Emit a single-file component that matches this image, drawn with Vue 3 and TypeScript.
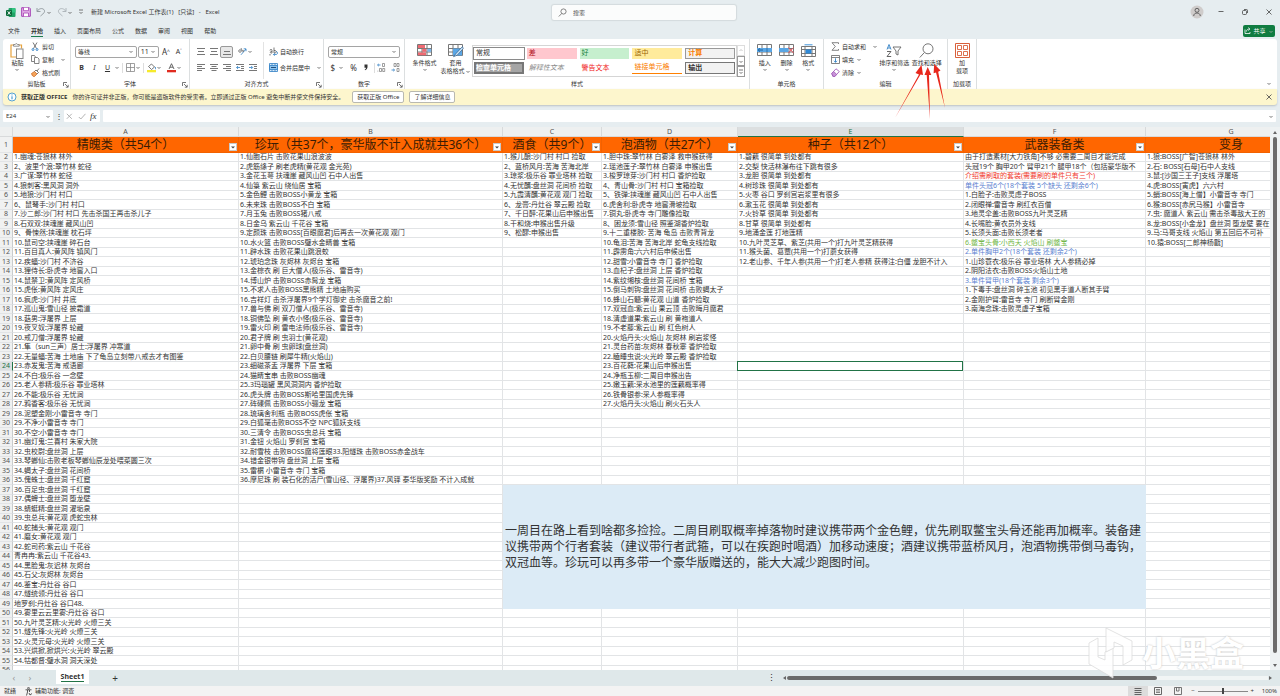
<script setup lang="ts">
import { ref } from 'vue'

interface Column {
  id: string
  title: string
  cls: string
  filter: boolean
  items: string[]
}

interface Cell {
  key: string
  text: string
  cls: string
  colspan: number
  rowspan: number
}

const columns: Column[] = [
  {
    id: 'A', title: '精魄类（共54个）', cls: 'col-a', filter: true,
    items: [
      '1.幽魂:苍狼林 林外', '2、波里个浪:翠竹林 蛇径', '3.广谋:翠竹林 蛇径', '4.狼刺客:黑风洞 洞外', '5.地狼:沙门村 村口',
      '6、鼠弩手:沙门村 村口', '7.沙二郎:沙门村 村口 先击杀国王再击杀儿子', '8.石双双:挟魂崖 藏风山凹', '9、骨悚然:挟魂崖 枕石坪',
      '10.鼠司空:挟魂崖 碎石台', '11.百目真人:黄风阵 镇风门', '12.疾蝠:沙门村 不济谷', '13.狸侍长:卧虎寺 地窖入口',
      '14.鼠禁卫:黄风阵 定风桥', '15.虎伥:黄风阵 定风庄', '16.疯虎:沙门村 井底', '17.巡山鬼:雪山径 披霜道', '18.菇男:浮屠界 上层',
      '19.夜叉奴:浮屠界 轮藏', '20.戒刀僧:浮屠界 轮藏', '21.隼（sun三声）居士:浮屠界 冲寒道',
      '22.无量蝠:苦海 土地庙 下了龟岛立刻带八戒去才有图鉴', '23.赤发鬼:苦海 戒语廊', '24.不白:极乐谷 一念壁',
      '25.老人参精:极乐谷 罪业塔林', '26.不能:极乐谷 无忧涧', '27.鸦香客:极乐谷 无忧涧', '28.泥塑金刚:小雷音寺 寺门',
      '29.不净:小雷音寺 寺门', '30.不空:小雷音寺 寺门', '31.幽灯鬼:兰喜村 朱家大院', '32.虫校尉:盘丝洞 上层',
      '33.琴螂仙:击败老板琴螂仙辰龙处喂菜圆三次', '34.蝎太子:盘丝洞 花间桥', '35.傀蛛士:盘丝洞 千红窟', '36.百足虫:盘丝洞 千红窟',
      '37.偶蜱士:盘丝洞 堕龙壁', '38.蜻蜓精:盘丝洞 濯垢泉', '39.虫总兵:黄花观 虎蛇虫林', '40.蛇捕头:黄花观 观门',
      '41.磨女:黄花观 观门', '42.蛇司药:紫云山 千花谷', '青冉冉:紫云山 千花谷43.', '44.黑脸鬼:灰迟林 灰烬台',
      '45.石父:灰烬林 灰烬台', '46.鉴宝:丹灶谷 谷口', '47.燧统领:丹灶谷 谷口', '地罗刹:丹灶谷 谷口48.',
      '49.雾里云云里雾:丹灶谷 谷口', '50.九叶灵芝精:火光岭 火燎三关', '51.燧先锋:火光岭 火燎三关', '52.火灵元母:火光岭 火燎三关',
      '53.兴烘掀,掀烘兴:火光岭 翠云殿', '54.牯都督:璧水洞 洞天深处',
    ],
  },
  {
    id: 'B', title: '珍玩（共37个，豪华版不计入成就共36个）', cls: 'col-b', filter: true,
    items: [
      '1.仙胞石片 击败花果山浪波波', '2.虎筋绦子 刷老虎精(黄花观 金光苑)', '3.金花玉萼 扶魂崖 藏风山凹 石中人出售', '4.仙箓 紫云山 绕仙居 宝箱',
      '5.金色鲤 击败BOSS小黄龙 宝箱', '6.未来珠 击败BOSS不白 宝箱', '7.月玉兔 击败BOSS猪八戒', '8.日金乌 紫云山 千花谷 宝箱',
      '9.定颜珠 击败BOSS[百眼魔君]后再去一次黄花观 观门', '10.水火篮 击败BOSS璧水金睛兽 宝箱', '11.辟水珠 击败花果山跳浪蛟',
      '12.琥珀念珠 灰烬林 灰烬台 宝箱', '13.金棕衣 刷 巨大僧人(极乐谷、雷音寺)', '14.博山炉 击败BOSS赤髯龙 宝箱',
      '15.不求人击败BOSS黑熊精 土地庙购买', '16.吉祥灯 击杀浮屠界9个学灯御史 击杀魔音之前!', '17.兽与佛 刷 双刀僧人(极乐谷、雷音寺)',
      '18.铜佛坠 刷 黄衣小怪(极乐谷、雷音寺)', '19.雷火印 刷 雷电法师(极乐谷、雷音寺)', '20.君子牌 刷 虫羽士(黄花观)',
      '21.卵中骨 刷 虫卵球(盘丝洞)', '22.白贝腰链 刷犀牛精(火焰山)', '23.细磁茶盂 浮屠界 下层 宝箱', '24.猫睛宝串 击败BOSS幽魂',
      '25.3玛瑙罐 黑风洞洞内 香炉捡取', '26.虎头牌 击败BOSS斯哈里国虎先锋', '27.砗磲佩 击败BOSS小骊龙 宝箱', '28.琉璃舍利瓶 击败BOSS虎伥 宝箱',
      '29.白狐毫击败BOSS不空 NPC狐妖支线', '30.三清令 击败BOSS虫总兵 宝箱', '31.金钮 火焰山 罗刹宫 宝箱',
      '32.耐雪枝 击败BOSS魔将莲眼33.阳燧珠 击败BOSS赤金战车', '34.错金银带钩 盘丝洞 上层 宝箱', '35.雷榍 小雷音寺 寺门 宝箱',
      '36.摩尼珠 刷 装石化的活尸(雪山径、浮屠界)37.风铎 泰华版奖励 不计入成就',
    ],
  },
  {
    id: 'C', title: '酒食（共9个）', cls: 'col-c', filter: true,
    items: [
      '1.猴儿酿:沙门村 村口 捡取', '2、蓝桥风月:苦海 苦海北岸', '3.琼浆:极乐谷 罪业塔林 捡取', '4.无忧醑:盘丝洞 花间桥 捡取',
      '5.九霞清醑:黄花观 观门 捡取', '6、龙膏:丹灶谷 翠云殿 捡取', '7、千日醉:花果山后申猴出售', '8.干和烧:申猴出售升级', '9、松醪:申猴出售',
    ],
  },
  {
    id: 'D', title: '泡酒物（共27个）', cls: 'col-d', filter: true,
    items: [
      '1.胆中珠:翠竹林 白雾泽 救申猴获得', '2.瑶池莲子:翠竹林 白雾泽 申猴出售', '3.梭罗琼芽:沙门村 村口 香炉捡取', '4、青山骨:沙门村 村口 宝箱捡取',
      '5、铁弹:挟魂崖 藏风山凹 石中人出售', '6.虎舍利:卧虎寺 地窖滑坡捡取', '7.铜丸:卧虎寺 寺门雕像捡取', '8、困龙须:雪山径 照鉴湖香炉捡取',
      '9.十二重楼胶: 苦海 龟岛 击败青背龙', '10.龟泪:苦海 苦海北岸 蛇龟支线捡取', '11.霹雳角:六六村后申候出售', '12.甜雪:小雷音寺 寺门 香炉捡取',
      '13.血杞子:盘丝洞 上层 香炉捡取', '14.紫纹缃核:盘丝洞 花间桥 宝箱', '15.倒马刺钩:盘丝洞 花间桥 击败蝎太子', '16.蜂山石髓:黄花观 山道 香炉捡取',
      '17.双冠血:紫云山 果云顶 击败晦月魔君', '18.清虚道果:紫云山 刷 黄袍道人', '19.不老藤:紫云山 刷 红色树人', '20.火焰丹头:火焰山 灰烬林 刷岩浆怪',
      '21.灵台药苗:灰烬林 春秋寨 香炉捡取', '22.瞌睡虫说:火光岭 翠云殿 香炉捡取', '23.百花蕤:花果山后申猴出售', '24.净瓶玉柳:二周目申猴出告',
      '25.嫩玉藕:采水池里的莲藕概率得', '26.铁骨银参:采人参概率得', '27.火焰丹头:火焰山 刷火石头人',
    ],
  },
  {
    id: 'E', title: '种子（共12个）', cls: 'col-e', filter: true,
    items: [
      '1.碧藕 很简单 到处都有', '2.交梨 快活林瀑布往下跳有很多', '3.龙胆 很简单 到处都有', '4.树珍珠 很简单 到处都有', '5.火枣 谷口 罗刹宫岩浆里有很多',
      '6.漱玉花 很简单 到处都有', '7.火铃草 很简单 到处都有', '8.甘草 很简单 到处都有', '9.地涌金莲 打地莲精',
      '10.九叶灵芝草、紫芝(共用一个)打九叶灵芝精获得', '11.猴头菌、葛蕈(共用一个)打蘑女获得',
      '12.老山参、千年人参(共用一个)打老人参精 获得注:白僵 龙胆不计入',
    ],
  },
  {
    id: 'F', title: '武器装备类', cls: 'col-f', filter: true,
    items: [
      '由于打造素材[大力铁角]不够 必需要二周目才能完成', '头冠19个 胸甲20个 臂甲21个 腿甲18个（包括豪华版不', '介绍需刷取的套装(需要刷的单件只有三个)',
      '单件头冠6个(18个套装 5个缺头 还剩余6个)', '1.白脸子:击败灵虑子BOSS', '2.闭眼禅:雷音寺 刷红衣百僧', '3.地灵伞盖:击败BOSS九叶灵芝精',
      '4.长嘴脸:黄衣员外支线', '5.长须头面:击败长须老者', '6.鳖宝头骨:小西天 火焰山 刷鳖宝', '2.单件胸甲2个(18个套装 还剩余2个)',
      '1.山珍蓑衣:极乐谷 罪业塔林 大人参精必掉', '2.阴阳法衣:击败BOSS火焰山土地', '3.单件臂甲(18个套装 剩余3个)',
      '1.下毒手:盘丝洞 碎玉池 初见黑手道人断其手臂', '2.金刚护臂:雷音寺 寺门 刷断臂金刚', '3.南海念珠:击败灵虚子宝箱',
    ],
  },
  {
    id: 'G', title: '变身', cls: 'col-g', filter: false,
    items: [
      '1.狼:BOSS[广智]苍狼林 林外', '2.石: BOSS[石母]石中人支线', '3.鼠:[沙国三王子]支线 浮屠塔', '4.虎:BOSS[寅虎】六六村',
      '5.蛸:BOSS[海上僧】小雷音寺 寺门', '6.猴:BOSS[赤尻马猴】小雷音寺', '7.虫: 魔道人 紫云山 需击杀毒敌大王的', '8.龙:BOSS[小金龙】盘丝洞 堕龙壁 要在',
      '9.马:马哥支线 火焰山 第五回后不可补', '10.猿:BOSS[二郎神杨戬]',
    ],
  },
]

const note =
  '一周目在路上看到啥都多捡捡。二周目刷取概率掉落物时建议携带两个金色鲤，优先刷取鳖宝头骨还能再加概率。装备建议携带两个行者套装（建议带行者武箍，可以在疾跑时喝酒）加移动速度；酒建议携带蓝桥风月，泡酒物携带倒马毒钩，双冠血等。珍玩可以再多带一个豪华版赠送的，能大大减少跑图时间。'

const tones: Record<string, string> = { F4: 'red', F5: 'blue', F11: 'green', F12: 'blue', F15: 'blue' }
const noteTop = 37
const noteRows = 13
const activeRow = 24

function buildRow(r: number): Cell[] {
  const cells: Cell[] = []
  const inNote = r >= noteTop && r < noteTop + noteRows
  for (const c of columns) {
    if (inNote && 'CDEF'.includes(c.id)) {
      if (r === noteTop && c.id === 'C') {
        cells.push({ key: 'note', text: note, cls: 'note', colspan: 4, rowspan: noteRows })
      }
      continue
    }
    const id = c.id + r
    const cls = [tones[id] ?? '', c.id === 'E' && r === activeRow ? 'active' : ''].join(' ')
    cells.push({ key: id, text: c.items[r - 2] ?? '', cls, colspan: 1, rowspan: 1 })
  }
  return cells
}

const rows = Array.from({ length: 55 }, (_, i) => ({ n: i + 2, cells: buildRow(i + 2) }))

const tabs = ['文件', '开始', '插入', '页面布局', '公式', '数据', '审阅', '视图', '帮助']
const activeTab = ref('开始')
const search = ref('')
const nameBox = ref('E24')
const formula = ref('')
const zoom = ref(50)

const styles = [
  { t: '常规', c: 's-normal' }, { t: '差', c: 's-bad' }, { t: '好', c: 's-good' }, { t: '适中', c: 's-mid' }, { t: '计算', c: 's-calc' },
  { t: '检查单元格', c: 's-check' }, { t: '解释性文本', c: 's-expl' }, { t: '警告文本', c: 's-warn' }, { t: '链接单元格', c: 's-link' }, { t: '输出', c: 's-out' },
]

const lines = (a: number[][]) => a.map(([x, y, w]) => `<path d="M${x} ${y}h${w}" stroke="#777"/>`).join('')
const grid = '<path d="M.5 .5h14v11h-14zM.5 4.5h14M.5 8h14M5 .5v11M10 .5v11" fill="#fff" stroke="#777"/>'

const icons: Record<string, string> = {
  chev: '<path d="M1.500 2l1.500 1.500L4.500 2" fill="none" stroke="#555" stroke-width=".8"/>',
  excel: '<rect x="2.500" y="0" width="7" height="9" rx="1" fill="#21a366"/><path d="M6 0h2.500a1 1 0 0 1 1 1v3.500H6z" fill="#33c481"/><rect x="0" y="2" width="6" height="6" rx="1" fill="#0b6b3a"/><path d="M1.700 3.300l2.600 3.400M4.300 3.300L1.700 6.700" stroke="#fff" stroke-width=".9"/>',
  save: '<path d="M.7.7h7.600l1 1v7.600H.7z" fill="#e6b5ea" stroke="#a33eb2"/><path d="M2.500.7v3h5v-3M2.500 9.300V6h5v3.300" fill="#fff" stroke="#a33eb2" stroke-width=".8"/>',
  undo: '<path d="M1 1v3.500h3.500M1.200 4.200C3 1.500 6 .8 7.800 2.500c1.700 2 .5 3.500-3.300 6.500" fill="none" stroke="#8b9499" stroke-width=".9"/>',
  redo: '<path d="M9 1v3.500H5.500M8.800 4.200C7 1.500 4 .8 2.200 2.500c-1.700 2-.5 3.500 3.300 6.500" fill="none" stroke="#a9b1b5" stroke-width=".9"/>',
  custom: '<path d="M1 1h4M1.500 3l1.500 1.500L4.500 3" fill="none" stroke="#555" stroke-width=".8"/>',
  search: '<circle cx="5.500" cy="3.500" r="2.600" fill="none" stroke="#666" stroke-width=".8"/><path d="M3.700 5.500L.8 8.500" stroke="#666" stroke-width=".8"/>',
  person: '<circle cx="7" cy="7" r="6.500" fill="#cfcccb"/><circle cx="7" cy="5.300" r="2" fill="none" stroke="#555" stroke-width=".9"/><path d="M3.700 11c0-4 6.600-4 6.600 0" fill="none" stroke="#555" stroke-width=".9"/>',
  restore: '<rect x=".5" y="1.500" width="4" height="4" rx="1" fill="none" stroke="#444" stroke-width=".8"/><path d="M2 .5h2.500a1 1 0 0 1 1 1V4" fill="none" stroke="#444" stroke-width=".8"/>',
  close: '<path d="M.5.5l5 5M5.500.5l-5 5" stroke="#444" stroke-width=".8"/>',
  min: '<path d="M.5 2.500h5" stroke="#444" stroke-width=".8"/>',
  share: '<path d="M1 2.500v4h5V5M2.500 4.500C2.500 2.500 4 2 5.500 2M4.300.6L5.900 2 4.300 3.500" fill="none" stroke="#fff" stroke-width=".8"/>',
  paste: '<path d="M4 2H1v12h5M9 2h2.500v3.500" fill="none" stroke="#e8a33d" stroke-width="1.200"/><path d="M3.500 3.200V1.500h1.700a1.200 1.200 0 0 1 2.300 0h1.700v1.700z" fill="#fff" stroke="#777" stroke-width=".8"/><rect x="6.500" y="6" width="6.500" height="9.500" fill="#fff" stroke="#888"/>',
  cut: '<path d="M2 .5l3.500 6M6 .5L2.500 6.500" stroke="#555" stroke-width=".8"/><circle cx="2" cy="7.500" r="1" fill="none" stroke="#2f7fc4" stroke-width=".9"/><circle cx="6" cy="7.500" r="1" fill="none" stroke="#2f7fc4" stroke-width=".9"/>',
  copy: '<path d="M3.500 6.500H.5V.5h3l1 1.500" fill="none" stroke="#666" stroke-width=".8"/><path d="M3.500 2.500h3l1.500 1.500v4.500H3.500z" fill="#fff" stroke="#666" stroke-width=".8"/>',
  brush: '<path d="M.5 5.500l3-2 2.500 2.500-2.500 2.500c-1 .3-2.500-.5-3-3z" fill="#f3a45c" stroke="#c8611a" stroke-width=".7"/><path d="M3.500 3.500L5 2l2.500 2.500L6 6M6 3l2-2.500" fill="none" stroke="#555" stroke-width=".8"/>',
  launch: '<path d="M.5 4V.5H4M2 2l3 3M5.200 2.800v2.400H2.800" fill="none" stroke="#555" stroke-width=".8"/>',
  borders: '<path d="M.5.5h8v8h-8zM4.500.5v8M.5 4.500h8" fill="none" stroke="#888" stroke-width=".8"/>',
  fill: '<path d="M1.500 3.500L4.500 1l3 3-3 2.500z" fill="#fff" stroke="#555" stroke-width=".8"/><path d="M8 4c1 1.500.8 2 0 2" fill="none" stroke="#2f7fc4"/><rect x="0" y="7" width="9" height="2.300" fill="#f6ea2c"/>',
  fontcol: '<path d="M2 6L4.500.7 7 6M3 4.200h3" fill="none" stroke="#555" stroke-width=".9"/><rect x="0" y="7" width="9" height="2.300" fill="#e02b20"/>',
  top: lines([[0, 1.500, 8], [1, 4.500, 6], [0, 7.500, 8]]),
  mid: lines([[0, 1.500, 8], [1, 4.500, 6], [0, 7.500, 8]]),
  bot: lines([[1, 4.500, 6], [0, 7.500, 8]]),
  left: lines([[0, 1.500, 8], [0, 3.500, 5], [0, 5.500, 8], [0, 7.500, 5]]),
  center: lines([[0, 1.500, 8], [1.500, 3.500, 5], [0, 5.500, 8], [1.500, 7.500, 5]]),
  right: lines([[0, 1.500, 8], [3, 3.500, 5], [0, 5.500, 8], [3, 7.500, 5]]),
  outdent: lines([[0, 1.500, 8], [5, 3.500, 3], [5, 5.500, 3], [0, 7.500, 8]]) + '<path d="M4 4.500H.7M2 3L.6 4.500 2 6" fill="none" stroke="#2f7fc4" stroke-width=".8"/>',
  indent: lines([[0, 1.500, 8], [5, 3.500, 3], [5, 5.500, 3], [0, 7.500, 8]]) + '<path d="M0 4.500h3.500M2.200 3l1.500 1.500L2.200 6" fill="none" stroke="#2f7fc4" stroke-width=".8"/>',
  orient: '<path d="M3 7.800L8 2M8 4.200V1.800H5.700" fill="none" stroke="#2f7fc4" stroke-width=".8"/><circle cx="2" cy="4" r="1.300" fill="none" stroke="#555" stroke-width=".7"/><path d="M3 1l1.500 3.500M4.500 3.500c1.500-.8 1.500 1.500.3 1.500" fill="none" stroke="#555" stroke-width=".7"/>',
  wrap: '<path d="M1 3.500c0-1.500 2-1.500 2 0V6c-2 .5-2.500-1.800 0-1.500M1 8.500V7M5 .5V6c3 .5 3-3 0-2.500" fill="none" stroke="#555" stroke-width=".8"/><path d="M7 4.500c2 0 2 3 0 3H4.500M5.700 6.300L4.400 7.500l1.300 1.300" fill="none" stroke="#2f7fc4" stroke-width=".8"/>',
  merge: '<path d="M.5.5h8v8h-8zM3 .5v2M6 .5v2M3 6.500v2M6 6.500v2" fill="#dcecf9" stroke="#2f7fc4" stroke-width=".8"/><path d="M.5 2.500h8v4h-8z" fill="#8fc4ef" stroke="#2f7fc4" stroke-width=".8"/><path d="M2 4.500h5" stroke="#1d4e7c"/>',
  comma: '<path d="M1.500 1.500h3v2.500C4.500 5.500 3.500 7 2 7.300L1.700 6.500c.9-.4 1.300-1 1.400-1.800H1.500z" fill="#333"/>',
  decup: '<path d="M3.500 2H.6M1.800.9L.6 2l1.200 1.200" fill="none" stroke="#2f7fc4" stroke-width=".8"/><path d="M5.500.5h2v3h-2zM2.500 5.500h2v3h-2zM5.700 5.500h2v3h-2zM.8 8.500v-.8" fill="none" stroke="#777" stroke-width=".7"/>',
  decdn: '<path d="M.5 7h3M2.300 5.900L3.500 7 2.300 8.200" fill="none" stroke="#2f7fc4" stroke-width=".8"/><path d="M3 .5h2v3H3zM6 .5h2v3H6zM6 5.500h2v3H6z" fill="none" stroke="#777" stroke-width=".7"/>',
  cond: grid + '<path d="M1 1h7v3H1zM1 8.500h8v2.700H1z" fill="#ef6a72"/><path d="M5.300 4.800h4v3h-4z" fill="#ef6a72"/><path d="M10.500 4.800h3.700v3h-3.700z" fill="#7db8ea"/>',
  tablefmt: grid + '<path d="M5 4.500h9v7H5z" fill="#5ba7e6"/><path d="M14.500 2.500L8 9.500l-2.500 3.200 3.700-1.500 6-6.500z" fill="#cfe4f6" stroke="#2c5d8a" stroke-width=".7"/>',
  insert: grid + '<path d="M0 4h15v4H0z" fill="#5aa6e4"/><path d="M6 6H1.300M3 4.300L1.200 6 3 7.700" fill="none" stroke="#1c5f9b" stroke-width=".9"/><path d="M10 4v4" stroke="#1c5f9b" stroke-width=".7"/>',
  remove: grid + '<path d="M0 4h9.500v4H0z" fill="#5aa6e4"/><path d="M9.500 3.500l5 5.500M14.500 3.500l-5 5.500" stroke="#e2505a" stroke-width="1"/>',
  format: '<path d="M3.500 .8h8" stroke="#2f8ad8" stroke-width=".9"/><path d="M.5 2.500h14v10h-14zM.5 5.500h14M.5 9.500h14M4 2.500v10M11 2.500v10" fill="#fff" stroke="#777"/><path d="M4.500 5.500h6v4h-6z" fill="#2f8ad8"/>',
  sum: '<path d="M7.500 2V.7H1l3.300 3.800L1 8.300h6.500V7" fill="none" stroke="#666" stroke-width=".8"/>',
  filldn: '<path d="M.5.5h8v8h-8zM.5 2.500h8" fill="none" stroke="#666" stroke-width=".8"/><path d="M4.500 3.300v4M3 5.800l1.500 1.500L6 5.800" fill="none" stroke="#2f7fc4" stroke-width=".9"/>',
  clear: '<path d="M.8 5.500L5 .8l3.300 2.700-4.500 5-2-.3z" fill="#fff" stroke="#9b4fb3" stroke-width=".8"/><path d="M.8 5.500l1.700-2 3.200 2.800-1.900 2.200-2-.3z" fill="#c894d8" stroke="#9b4fb3" stroke-width=".7"/>',
  sort: '<path d="M1 6.500L3 1.500l2 5M1.700 5h2.600" fill="none" stroke="#2f7fc4" stroke-width=".9"/><path d="M1 8.500h4l-4 5h4.200" fill="none" stroke="#555" stroke-width=".9"/><path d="M7 4h8l-3 4v4l-2-1V8z" fill="#fff" stroke="#666" stroke-width=".9"/>',
  find: '<circle cx="9" cy="5.800" r="5" fill="#fff" stroke="#666" stroke-width=".9"/><path d="M5.400 9.500L.8 14.500" stroke="#666" stroke-width=".9"/>',
  addin: '<path d="M.5.5h14v14H.5z" fill="#fff" stroke="#d9603b"/><path d="M2.500 2.500h4v4h-4zM8.500 2.500h4v4h-4zM2.500 8.500h4v4h-4zM8.500 8.500h4v4h-4z" fill="#fff" stroke="#d9603b" stroke-width=".9"/>',
  info: '<circle cx="5" cy="5" r="4" fill="#fff" stroke="#2b8ac8" stroke-width=".8"/><path d="M5 4.300v3M5 2.500v.9" stroke="#2b8ac8"/>',
  check: '<path d="M.8 4l2 2L7.500.8" fill="none" stroke="#aaa" stroke-width=".9"/>',
  cross: '<path d="M.8.8l5 5M5.800.8l-5 5" stroke="#aaa" stroke-width=".9"/>',
  access: '<circle cx="3.500" cy="1.200" r=".9" fill="none" stroke="#333" stroke-width=".7"/><path d="M.5 2.800h6M2.500 3v2L1.500 8.500M4.500 3v2" fill="none" stroke="#333" stroke-width=".8"/><path d="M4 6l1 2 2-1.500" fill="none" stroke="#333" stroke-width=".8"/>',
  vnormal: '<path d="M.5 1.500h7M.5 3.500h7M.5 5.500h7M.5 7.500h7" stroke="#444" stroke-width=".8"/>',
  vlayout: '<path d="M.5.5h7v7h-7z" fill="none" stroke="#666"/><path d="M2 2.500h4M2 4h4M2 5.500h4" stroke="#555" stroke-width=".7"/>',
  vbreak: '<path d="M.5.500h7v7h-7zM2.500 .5v3.500h2.500V.5" fill="none" stroke="#666" stroke-width=".9"/>',
}
</script>

<template>
  <div class="app">
    <header class="titlebar">
      <button class="bare" aria-label="Excel"><svg width="10" height="9" v-html="icons.excel" /></button>
      <button class="bare save" aria-label="保存"><svg width="10" height="10" v-html="icons.save" /></button>
      <button class="bare" aria-label="撤消"><svg width="10" height="10" v-html="icons.undo" /><svg width="6" height="5" v-html="icons.chev" /></button>
      <button class="bare" aria-label="恢复"><svg width="10" height="10" v-html="icons.redo" /><svg width="6" height="5" v-html="icons.chev" /></button>
      <button class="bare" aria-label="自定义"><svg width="6" height="6" v-html="icons.custom" /></button>
      <h1>新建 Microsoft Excel 工作表(1)&nbsp;&nbsp; [只读]&nbsp;&nbsp; -&nbsp;&nbsp; Excel</h1>
      <label class="search">
        <svg width="9" height="10" v-html="icons.search" />
        <input v-model="search" type="text" placeholder="搜索" aria-label="搜索" />
      </label>
      <div class="window">
        <button class="bare" aria-label="帐户"><svg width="14" height="14" v-html="icons.person" /></button>
        <button class="bare" aria-label="最小化"><svg width="6" height="6" v-html="icons.min" /></button>
        <button class="bare" aria-label="还原"><svg width="6" height="6" v-html="icons.restore" /></button>
        <button class="bare" aria-label="关闭"><svg width="6" height="6" v-html="icons.close" /></button>
      </div>
    </header>

    <nav class="tabs">
      <button v-for="t in tabs" :key="t" :class="{ on: t === activeTab }" @click="activeTab = t">{{ t }}</button>
      <button class="share"><svg width="7" height="8" v-html="icons.share" />共享<svg width="6" height="5" class="white" v-html="icons.chev" /></button>
    </nav>

    <section class="ribbon">
      <div class="group clip">
        <div class="body">
          <button class="big"><svg width="14" height="16" v-html="icons.paste" /><span>粘贴</span><svg width="6" height="5" v-html="icons.chev" /></button>
          <div class="stack">
            <button><svg width="9" height="9" v-html="icons.cut" />剪切</button>
            <button><svg width="9" height="9" v-html="icons.copy" />复制<svg class="far" width="6" height="5" v-html="icons.chev" /></button>
            <button><svg width="9" height="9" v-html="icons.brush" />格式刷</button>
          </div>
        </div>
        <div class="label">剪贴板<svg width="6" height="6" v-html="icons.launch" /></div>
      </div>

      <div class="group font">
        <div class="body two">
          <div class="line">
            <span class="pick wide"><select aria-label="字体"><option>等线</option></select><svg width="6" height="5" v-html="icons.chev" /></span>
            <span class="pick size"><select aria-label="字号"><option>11</option></select><svg width="6" height="5" v-html="icons.chev" /></span>
            <button class="b13 grow">A<sup>^</sup></button>
            <button class="b13 shrink">A<sup>˅</sup></button>
          </div>
          <div class="line">
            <button class="b13"><b>B</b></button>
            <button class="b13"><i>I</i></button>
            <button class="b13"><u>U</u></button>
            <svg width="6" height="5" v-html="icons.chev" />
            <span class="sep" />
            <button class="b10" aria-label="边框"><svg width="9" height="9" v-html="icons.borders" /></button>
            <svg width="6" height="5" v-html="icons.chev" />
            <span class="sep" />
            <button class="b10" aria-label="填充颜色"><svg width="9" height="10" v-html="icons.fill" /></button>
            <svg width="6" height="5" v-html="icons.chev" />
            <span class="nosep" />
            <button class="b10" aria-label="字体颜色"><svg width="9" height="10" v-html="icons.fontcol" /></button>
            <svg width="6" height="5" v-html="icons.chev" />
          </div>
        </div>
        <div class="label">字体<svg width="6" height="6" v-html="icons.launch" /></div>
      </div>

      <div class="group align">
        <div class="body">
          <div class="two">
            <div class="line">
              <button class="b13" aria-label="顶端对齐"><svg width="8" height="9" v-html="icons.top" /></button>
              <button class="b13" aria-label="垂直居中"><svg width="8" height="9" v-html="icons.mid" /></button>
              <button class="b13 pressed" aria-label="底端对齐"><svg width="8" height="9" v-html="icons.bot" /></button>
              <span class="nosep" />
              <button class="b10" aria-label="方向"><svg width="9" height="9" v-html="icons.orient" /></button>
              <svg width="6" height="5" v-html="icons.chev" />
            </div>
            <div class="line">
              <button class="b13" aria-label="左对齐"><svg width="8" height="9" v-html="icons.left" /></button>
              <button class="b13" aria-label="居中"><svg width="8" height="9" v-html="icons.center" /></button>
              <button class="b13" aria-label="右对齐"><svg width="8" height="9" v-html="icons.right" /></button>
              <button class="b13" aria-label="减少缩进"><svg width="8" height="9" v-html="icons.outdent" /></button>
              <button class="b13" aria-label="增加缩进"><svg width="8" height="9" v-html="icons.indent" /></button>
            </div>
          </div>
          <div class="two divided">
            <button class="line txt"><svg width="9" height="9" v-html="icons.wrap" />自动换行</button>
            <button class="line txt"><svg width="9" height="9" v-html="icons.merge" />合并后居中<svg class="far" width="6" height="5" v-html="icons.chev" /></button>
          </div>
        </div>
        <div class="label">对齐方式<svg width="6" height="6" v-html="icons.launch" /></div>
      </div>

      <div class="group number">
        <div class="body two">
          <div class="line">
            <span class="pick fmt"><select aria-label="数字格式"><option>常规</option></select><svg width="6" height="5" v-html="icons.chev" /></span>
          </div>
          <div class="line">
            <button class="b10 sign">$</button>
            <svg width="6" height="5" v-html="icons.chev" />
            <span class="nosep" />
            <button class="b13 sign">%</button>
            <button class="b13" aria-label="千位分隔"><svg width="6" height="9" v-html="icons.comma" /></button>
            <span class="sep" />
            <button class="b10" aria-label="增加小数位"><svg width="9" height="9" v-html="icons.decup" /></button>
            <span class="nosep" />
            <button class="b10" aria-label="减少小数位"><svg width="9" height="9" v-html="icons.decdn" /></button>
          </div>
        </div>
        <div class="label">数字<svg width="6" height="6" v-html="icons.launch" /></div>
      </div>

      <div class="group styles">
        <div class="body">
          <button class="big w30"><svg width="15" height="14" v-html="icons.cond" /><span>条件格式</span><svg width="6" height="5" v-html="icons.chev" /></button>
          <button class="big w30"><svg width="16" height="14" v-html="icons.tablefmt" /><span>套用</span><span class="nw">表格格式<svg width="6" height="5" v-html="icons.chev" /></span></button>
          <div class="gallery">
            <button v-for="s in styles" :key="s.t" :class="s.c">{{ s.t }}</button>
          </div>
          <div class="steps">
            <button aria-label="上一行"><svg width="6" height="5" class="flip" v-html="icons.chev" /></button>
            <button aria-label="下一行"><svg width="6" height="5" v-html="icons.chev" /></button>
            <button aria-label="更多"><svg width="6" height="6" v-html="icons.custom" /></button>
          </div>
        </div>
        <div class="label">样式</div>
      </div>

      <div class="group cells">
        <div class="body">
          <button class="big w22"><svg width="15" height="14" v-html="icons.insert" /><span>插入</span><svg width="6" height="5" v-html="icons.chev" /></button>
          <button class="big w22"><svg width="15" height="14" v-html="icons.remove" /><span>删除</span><svg width="6" height="5" v-html="icons.chev" /></button>
          <button class="big w22"><svg width="15" height="14" v-html="icons.format" /><span>格式</span><svg width="6" height="5" v-html="icons.chev" /></button>
        </div>
        <div class="label">单元格</div>
      </div>

      <div class="group edit">
        <div class="body">
          <div class="stack">
            <button><svg width="9" height="9" v-html="icons.sum" />自动求和<svg class="far" width="6" height="5" v-html="icons.chev" /></button>
            <button><svg width="9" height="9" v-html="icons.filldn" />填充<svg width="6" height="5" v-html="icons.chev" /></button>
            <button><svg width="9" height="9" v-html="icons.clear" />清除<svg width="6" height="5" v-html="icons.chev" /></button>
          </div>
          <button class="big w33"><svg width="16" height="15" v-html="icons.sort" /><span>排序和筛选</span><svg width="6" height="5" v-html="icons.chev" /></button>
          <button class="big w33"><svg width="15" height="15" v-html="icons.find" /><span>查找和选择</span></button>
        </div>
        <div class="label">编辑</div>
        <svg class="arrows" width="56" height="58" viewBox="0 0 56 58" fill="#e8281c">
          <path d="M2 56L26 12.500 22.500 11 28.500 3l1.500 10-2.500-.5z" />
          <path d="M37 57L33.700 13H31.500L34.700 5l3.600 8h-2.300z" />
          <path d="M52 46L43 10.500l-2.400.7L41.200 2l6.300 6.500-2.300 1.200z" />
        </svg>
      </div>

      <div class="group addins">
        <div class="body">
          <button class="big w28"><svg width="15" height="15" v-html="icons.addin" /><span>加</span><span>载项</span></button>
        </div>
        <div class="label">加载项</div>
      </div>
      <button class="bare fold" aria-label="折叠功能区"><svg width="6" height="5" v-html="icons.chev" /></button>
    </section>

    <section class="message">
      <svg width="10" height="10" v-html="icons.info" />
      <strong>获取正版 OFFICE</strong>
      <p>你的许可证并非正版，你可能是盗版软件的受害者。立即通过正版 Office 避免中断并使文件保持安全。</p>
      <button>获取正版 Office</button>
      <button>了解详细信息</button>
      <button class="bare dismiss" aria-label="关闭"><svg width="6" height="6" v-html="icons.close" /></button>
    </section>

    <section class="formula">
      <span class="namebox"><input v-model="nameBox" type="text" aria-label="名称框" /><svg width="6" height="5" v-html="icons.chev" /></span>
      <span class="dots">⋮</span>
      <span class="fxbox">
        <svg width="8" height="7" v-html="icons.cross" />
        <svg width="8" height="7" v-html="icons.check" />
        <i>fx</i>
      </span>
      <span class="entry"><input v-model="formula" type="text" aria-label="编辑栏" /><svg width="6" height="5" v-html="icons.chev" /></span>
    </section>

    <main class="sheet">
      <div class="view">
        <table>
          <colgroup>
            <col class="col-n" />
            <col v-for="c in columns" :key="c.id" :class="c.cls" />
          </colgroup>
          <thead>
            <tr class="letters">
              <th class="corner"></th>
              <th v-for="c in columns" :key="c.id" :class="{ cur: c.id === 'E' }">{{ c.id }}</th>
            </tr>
          </thead>
          <tbody>
            <tr class="titles">
              <th class="num">1</th>
              <td v-for="c in columns" :key="c.id">
                {{ c.title }}
                <button v-if="c.filter" :aria-label="'筛选 ' + c.id"><svg width="6" height="5" viewBox="0 0 6 5"><path d="M1 1.500h4l-2 2z" fill="#444" /></svg></button>
              </td>
            </tr>
            <tr v-for="r in rows" :key="r.n" :class="r.n % 2 ? 'odd' : 'even'">
              <th class="num" :class="{ cur: r.n === activeRow }">{{ r.n }}</th>
              <td v-for="c in r.cells" :key="c.key" :class="c.cls" :colspan="c.colspan" :rowspan="c.rowspan">{{ c.text }}</td>
            </tr>
          </tbody>
        </table>
      </div>
      <div class="vscroll"><i class="up" /><span /><i class="down" /></div>
      <div class="watermark">
        <svg width="46" height="53" viewBox="-1 -1 46 53">
          <g fill="#fff" fill-opacity=".85" stroke="#dcdcdc" stroke-width=".8">
            <path d="M0 16l9-5v19l7 3v-8l8-4v30L0 37z" />
            <path d="M17 1l26 13v19l-9 5V19l-9-4v6l-8 4z" />
          </g>
        </svg>
        <span>小黑盒</span>
      </div>
    </main>

    <footer class="sheetbar">
      <button class="bare nav">‹</button>
      <button class="bare nav">›</button>
      <button class="tab"><span>Sheet1</span></button>
      <button class="bare plus">+</button>
      <span class="grip">⋮</span>
      <div class="hscroll"><i class="lt" /><div class="track"><span /></div><i class="rt" /></div>
    </footer>

    <footer class="status">
      <span>就绪</span>
      <svg width="8" height="9" v-html="icons.access" />
      <span>辅助功能: 调查</span>
      <div class="views">
        <button class="on" aria-label="普通"><svg width="8" height="8" v-html="icons.vnormal" /></button>
        <button aria-label="页面布局"><svg width="8" height="8" v-html="icons.vlayout" /></button>
        <button aria-label="分页预览"><svg width="8" height="8" v-html="icons.vbreak" /></button>
        <span class="minus">−</span>
        <input v-model="zoom" type="range" min="0" max="100" aria-label="缩放" />
        <span>+</span>
        <span class="pct">100%</span>
      </div>
    </footer>
  </div>
</template>

<style>
html,
body {
  margin: 0;
  overflow: hidden;
}
</style>

<style scoped>
.app {
  display: flex;
  flex-direction: column;
  height: 100vh;
  overflow: hidden;
  background: #e6edf0;
  color: #333;
  font: 6px/8px "Noto Sans", "Noto Sans CJK SC", sans-serif;
}
* {
  box-sizing: border-box;
}
button,
input,
select {
  margin: 0;
  padding: 0;
  border: 0;
  background: none;
  color: inherit;
  font: inherit;
  outline: none;
  appearance: none;
}
button {
  display: flex;
  align-items: center;
  justify-content: center;
  white-space: nowrap;
}
svg {
  display: block;
  flex: none;
}

/* title bar */
.titlebar {
  position: relative;
  display: flex;
  flex: none;
  align-items: center;
  height: 24px;
  padding: 0 8px 0 6px;
  gap: 5px;
}
h1 {
  margin: 0 0 0 2px;
  font: inherit;
}
.search {
  position: absolute;
  left: 50%;
  top: 5px;
  display: flex;
  align-items: center;
  gap: 6px;
  width: 184px;
  height: 15px;
  padding-left: 6px;
  border-radius: 2px;
  background: #fbfcfc;
  box-shadow: 0 0 1px 1px #d3dadd;
  transform: translateX(-88px);
}
.search input {
  flex: 1;
  min-width: 0;
}
.search input::placeholder {
  color: #555;
  opacity: 1;
}
.window {
  display: flex;
  align-items: center;
  gap: 18px;
  margin-left: auto;
}
.window button:first-child {
  margin-right: -4px;
}

/* ribbon tabs */
.tabs {
  display: flex;
  flex: none;
  gap: 11px;
  height: 15px;
  padding: 1px 5px 2px 8px;
}
.tabs button {
  height: 12px;
  border-bottom: 1px solid transparent;
}
.tabs .on {
  border-color: #1d7d4f;
  font-weight: 700;
}
.tabs .share {
  gap: 2px;
  width: 32px;
  margin-left: auto;
  border: 0;
  border-radius: 2px;
  background: #107c41;
  color: #fff;
}
.white {
  filter: invert(1);
}

/* ribbon */
.ribbon {
  display: flex;
  flex: none;
  height: 50px;
  margin: 0 3px;
  border-radius: 3px 3px 0 0;
  background: #fff;
}
.group {
  position: relative;
  display: flex;
  flex: none;
  flex-direction: column;
  border-right: 1px solid #dcdfe0;
}
.clip { width: 68px; }
.font { width: 119px; }
.align { width: 134px; }
.number { width: 81px; }
.styles { width: 345px; }
.cells { width: 74px; }
.edit { width: 124px; }
.addins { width: 29px; }
.body {
  display: flex;
  flex: 1;
  padding: 3px 4px 0;
}
.label {
  display: flex;
  align-items: center;
  justify-content: center;
  height: 10px;
}
.label svg {
  position: absolute;
  right: 1px;
  bottom: 1px;
}
.big {
  flex-direction: column;
  justify-content: flex-start;
  width: 22px;
  padding-top: 1px;
}
.big > svg:first-child {
  height: 16px;
}
.nw {
  display: flex;
  align-items: center;
}
.w30 { width: 31px; }
.w30 > svg:first-child,
.w22 > svg:first-child { margin-top: 1px; height: 15px; }
.w22 { width: 22px; }
.w33 { width: 33px; }
.w28 { width: 20px; }
.stack {
  display: flex;
  flex-direction: column;
  align-items: flex-start;
  gap: 4px;
  padding-left: 3px;
}
.stack button {
  gap: 2px;
  height: 9px;
}
.far {
  margin-left: 4px;
}
.two {
  display: flex;
  flex-direction: column;
  gap: 3px;
  padding-top: 6px;
}
div.body .two {
  padding-top: 3px;
}
.line {
  display: flex;
  align-items: center;
  height: 13px;
}
.b13 { width: 13px; height: 12px; font-size: 7px; }
.b10 { width: 10px; height: 12px; }
.sign { font-size: 8px; }
.b13 sup { font-size: 5px; line-height: 5px; }
.grow { font-size: 8px; }
.pressed {
  border: 1px solid #999;
  border-radius: 2px;
  background: #e8e8e8;
}
.sep {
  width: 1px;
  height: 10px;
  margin: 0 2px;
  background: #ddd;
}
.nosep { width: 4px; }
.pick {
  display: flex;
  align-items: center;
  height: 12px;
  padding: 0 2px;
  border: 1px solid #a5a5a5;
  border-radius: 2px;
  background: #fff;
}
.pick select {
  flex: 1;
  min-width: 0;
}
.wide { width: 63px; }
.size { width: 21px; margin: 0 1px; font-size: 7px; }
.fmt { width: 73px; }
.divided {
  margin-left: 4px;
  padding-left: 5px;
  border-left: 1px solid #e3e3e3;
}
.txt {
  gap: 2px;
  justify-content: flex-start;
}
.gallery {
  display: grid;
  flex: 1;
  grid-template-columns: repeat(5, 1fr);
  gap: 3px;
  height: 32px;
  margin: 3px 0 0 1px;
  padding: 2px 1px;
  border: 1px solid #d5d5d5;
}
.gallery button {
  justify-content: flex-start;
  padding-left: 2px;
  font-size: 7px;
}
.gallery .s-normal { outline: 1px solid #8a8a8a; }
.s-bad { background: #ffc7ce; color: #b01020; }
.s-good { background: #c6efce; color: #16803a; }
.s-mid { background: #ffeb9c; color: #9c6500; }
.gallery .s-calc { border: 1px solid #999; background: #f2f2f2; color: #fa7d00; font-weight: 700; }
.gallery .s-check { border: 2px solid #777; background: #a5a5a5; color: #fff; font-weight: 700; padding-left: 0; }
.s-expl { color: #8a8a8a; font-style: italic; }
.s-warn { color: #f02020; }
.gallery .s-link { border-bottom: 1px solid #ff8001; color: #fa7d00; }
.gallery .s-out { border: 1px solid #777; background: #f2f2f2; font-weight: 700; }
.steps {
  display: flex;
  flex-direction: column;
  width: 8px;
  height: 32px;
  margin-top: 3px;
}
.steps button {
  flex: 1;
  border: 1px solid #999;
}
.steps button:first-child { border-color: #ddd; }
.flip { transform: rotate(180deg); opacity: .4; }
.arrows {
  position: absolute;
  left: 69px;
  top: 23px;
  z-index: 3;
}
.fold {
  align-self: flex-end;
  margin: 0 5px 3px auto;
}

/* message bar */
.message {
  display: flex;
  flex: none;
  align-items: center;
  height: 16px;
  margin: 0 3px;
  padding: 0 5px 0 4px;
  border-radius: 0 0 3px 3px;
  background: #fdf6cd;
  box-shadow: 0 1px 2px #bcc3c5;
}
.message strong { margin: 0 5px 0 4px; }
.message p { margin: 0 8px 0 0; }
.message button:not(.bare) {
  height: 12px;
  margin-right: 5px;
  padding: 0 4px;
  border: 1px solid #b9b9b0;
  border-radius: 2px;
  background: #fff;
}
.message .dismiss { margin-left: auto; }

/* formula bar */
.formula {
  display: flex;
  flex: none;
  align-items: center;
  height: 12px;
  margin: 5px 4px 5px 3px;
}
.namebox,
.fxbox,
.entry {
  display: flex;
  align-items: center;
  height: 12px;
  padding: 0 2px;
  border-radius: 1px;
  background: #fff;
}
.namebox { width: 50px; }
.entry { flex: 1; }
.formula input { flex: 1; width: 0; padding-left: 1px; }
.dots { width: 11px; font-size: 8px; text-align: center; }
.fxbox { gap: 4px; width: 36px; margin-right: 3px; }
.fxbox i { font: italic 9px/10px "Liberation Serif", serif; }

/* worksheet */
.sheet {
  position: relative;
  display: flex;
  flex: 1;
  min-height: 0;
}
.view {
  flex: 1;
  min-width: 0;
  overflow: hidden;
  background: #fff;
}
table {
  width: calc(100% + 47px);
  border-spacing: 0;
  table-layout: fixed;
  font-size: 7px;
  line-height: 8px;
}
.col-n { width: 13px; }
.col-a { width: 226px; }
.col-b { width: 264px; }
.col-c { width: 99px; }
.col-d { width: 136px; }
.col-e { width: 226px; }
.col-f { width: 182px; }
th,
td {
  padding: 0;
  border: solid #e2e4e6;
  border-width: 0 1px 1px 0;
  overflow: hidden;
  white-space: nowrap;
  font-weight: 400;
}
td { padding-left: 1px; }
.even > * { height: 9px; }
.odd > * { height: 10px; }
.letters th {
  height: 10px;
  border-color: #d8dadb;
  background: #eef0f0;
  color: #555;
  font-size: 7px;
}
.letters .cur {
  border-bottom-color: #217346;
  background: #dcdfe0;
  color: #217346;
}
.num {
  border-right-color: #c9cccd;
  background: #f0f1f1;
  color: #555;
  text-align: center;
}
.num.cur {
  border-right-color: #217346;
  background: #dcdfe0;
  color: #217346;
}
.titles > * { height: 16px; }
.titles td {
  position: relative;
  padding: 0;
  border-color: #f26100;
  background: #ff6600;
  color: #3a1c05;
  font-size: 12px;
  line-height: 15px;
  text-align: center;
}
.titles button {
  position: absolute;
  right: 1px;
  bottom: 1px;
  width: 8px;
  height: 8px;
  border: 1px solid #c9c9c9;
  background: #fff;
}
.red { color: #f03a2e; }
.blue { color: #5b7fd0; }
.green { color: #74b74a; }
.active {
  position: relative;
  overflow: visible;
}
.active::after {
  content: "";
  position: absolute;
  inset: -1px 0 -1px -1px;
  border: 1px solid #217346;
}
.note {
  padding: 0 2px 0 2px;
  border-color: #dcebf6;
  background: #dcebf6;
  font-size: 12px;
  line-height: 16px;
  white-space: normal;
}
.vscroll {
  display: flex;
  flex-direction: column;
  align-items: center;
  width: 10px;
  padding: 2px 0 1px;
  background: #eef2f3;
}
.vscroll span {
  width: 4px;
  height: 516px;
  margin: 3px 0 auto;
  border-radius: 2px;
  background: #6b6b6b;
}
.vscroll i,
.hscroll i {
  border: 2px solid transparent;
}
.vscroll .up { border-bottom: 3px solid #666; }
.vscroll .down { border-top: 3px solid #666; }
.hscroll .lt { border-right: 3px solid #666; }
.hscroll .rt { border-left: 3px solid #666; }
.watermark {
  position: absolute;
  right: 36px;
  bottom: -9px;
  z-index: 2;
  display: flex;
  align-items: center;
  gap: 8px;
  pointer-events: none;
}
.watermark span {
  color: #fff;
  font-size: 34px;
  font-weight: 700;
  line-height: 40px;
  text-shadow: 0 0 2px #bbb;
}

/* sheet tabs */
.sheetbar {
  display: flex;
  flex: none;
  align-items: center;
  height: 16px;
  padding: 0 6px 0 9px;
  background: #dfe8ea;
}
.nav { width: 10px; margin-right: 6px; color: #999; font-size: 9px; }
.tab {
  width: 33px;
  height: 14px;
  margin: 0 20px 2px 15px;
  background: #fff;
  font-size: 7px;
  font-weight: 700;
}
.tab span { border-bottom: 1px solid #217346; line-height: 9px; }
.plus { width: 12px; font-size: 10px; }
.grip { margin-left: auto; font-size: 9px; }
.hscroll {
  display: flex;
  align-items: center;
  width: 39%;
  margin-left: 5px;
}
.track {
  flex: 1;
  margin: 0 1px;
  background: #f1f5f5;
}
.track span {
  display: block;
  width: 77%;
  height: 4px;
  border-radius: 2px;
  background: #6b6b6b;
}

/* status bar */
.status {
  display: flex;
  flex: none;
  align-items: center;
  height: 10px;
  padding: 0 3px 0 4px;
  background: #f3f3f3;
}
.status > svg { margin: 0 2px 0 9px; }
.views {
  display: flex;
  align-items: center;
  margin-left: auto;
}
.views button { width: 20px; height: 10px; }
.views .on { background: #dcdcdc; }
.views .minus { margin-left: 3px; }
.views input {
  width: 50px;
  height: 8px;
  margin: 0 3px;
  background: linear-gradient(#888, #888) center / 100% 1px no-repeat;
}
.views input::-webkit-slider-thumb {
  width: 2px;
  height: 6px;
  background: #444;
  appearance: none;
}
.views .pct { width: 23px; text-align: right; }
</style>
